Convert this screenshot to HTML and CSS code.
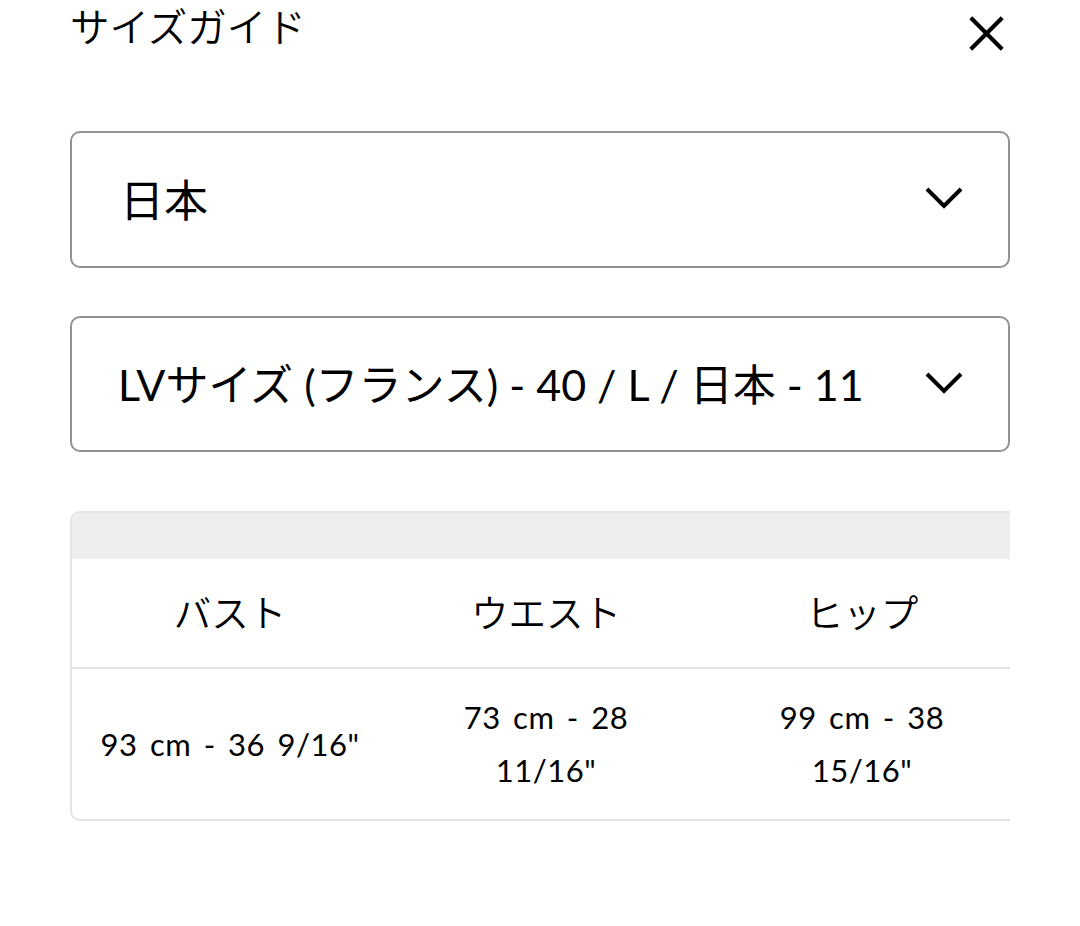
FILE: index.html
```html
<!DOCTYPE html>
<html lang="ja">
<head>
<meta charset="utf-8">
<title>サイズガイド</title>
<link rel="stylesheet" href="styles.css">
</head>
<body>
<div class="page">
  <header class="top">
    <h1 class="title">サイズガイド</h1>
    <button class="close" aria-label="閉じる">
      <svg width="40" height="40" viewBox="0 0 40 40"><path d="M3 3 L37 37 M37 3 L3 37" stroke="#000" stroke-width="4.5" fill="none"/></svg>
    </button>
  </header>

  <div class="select sel1">
    <span class="sel-text">日本</span>
    <svg class="chev" width="40" height="26" viewBox="0 0 40 26"><path d="M3 4 L20 21 L37 4" stroke="#000" stroke-width="4" fill="none"/></svg>
  </div>

  <div class="select sel2">
    <span class="sel-text">LVサイズ (フランス) - 40 / L / 日本 - 11</span>
    <svg class="chev" width="40" height="26" viewBox="0 0 40 26"><path d="M3 4 L20 21 L37 4" stroke="#000" stroke-width="4" fill="none"/></svg>
  </div>

  <div class="table-wrap">
    <div class="table">
      <div class="strip"></div>
      <div class="row head">
        <div class="cell">バスト</div>
        <div class="cell">ウエスト</div>
        <div class="cell">ヒップ</div>
      </div>
      <div class="row data">
        <div class="cell">93 cm - 36 9/16"</div>
        <div class="cell">73 cm - 28<br>11/16"</div>
        <div class="cell">99 cm - 38<br>15/16"</div>
      </div>
    </div>
  </div>
</div>
</body>
</html>
```

FILE: styles.css
```css
* { box-sizing: border-box; }
html, body { margin: 0; padding: 0; background: #fff; }
body {
  font-family: Lato, "Noto Sans CJK JP", sans-serif;
  font-weight: 350;
  color: #000;
}
.page {
  width: 1080px;
  padding-left: 70px;
}
.top {
  width: 940px;
  height: 60px;
  display: flex;
  justify-content: space-between;
  align-items: flex-start;
}
.title {
  margin: 0;
  font-weight: 350;
  font-size: 39.5px;
  line-height: 56px;
  margin-top: -1px;
}
.close {
  border: 0;
  background: none;
  padding: 0;
  margin: 14px 3px 0 0;
  width: 40px;
  height: 40px;
  display: flex;
}
.close svg { width: 37px; height: 37px; margin: 1px; }
.select {
  width: 940px;
  height: 137px;
  border: 2.5px solid #929292;
  border-radius: 10px;
  display: flex;
  align-items: center;
  justify-content: space-between;
  padding: 0 44px 0 48px;
}
.sel1 { margin-top: 71px; }
.sel2 { margin-top: 48px; height: 136px; }
.sel-text {
  font-size: 44px;
  font-weight: 400;
  line-height: 1;
}
.sel2 .sel-text { margin-left: -2px; font-size: 43px; }
.chev { display: block; margin-top: -3px; }
.table-wrap {
  margin-top: 59px;
  width: 940px;
  height: 310px;
  overflow: hidden;
  border: 2px solid #e4e4e4;
  border-right: 0;
  border-radius: 10px 0 0 10px;
}
.table { width: 948px; }
.strip {
  height: 46px;
  background: #eeeeee;
}
.row {
  display: grid;
  grid-template-columns: 316px 316px 316px;
}
.head {
  height: 110px;
  border-bottom: 2px solid #e4e4e4;
}
.head .cell {
  font-size: 37.5px;
  display: flex;
  align-items: center;
  justify-content: center;
  padding-bottom: 6px;
}
.data { height: 150px; }
.data .cell {
  font-family: Lato, sans-serif;
  font-size: 31px;
  font-weight: 400;
  word-spacing: 4px;
  letter-spacing: 0.5px;
  line-height: 53px;
  display: flex;
  align-items: center;
  justify-content: center;
  text-align: center;
}
```
